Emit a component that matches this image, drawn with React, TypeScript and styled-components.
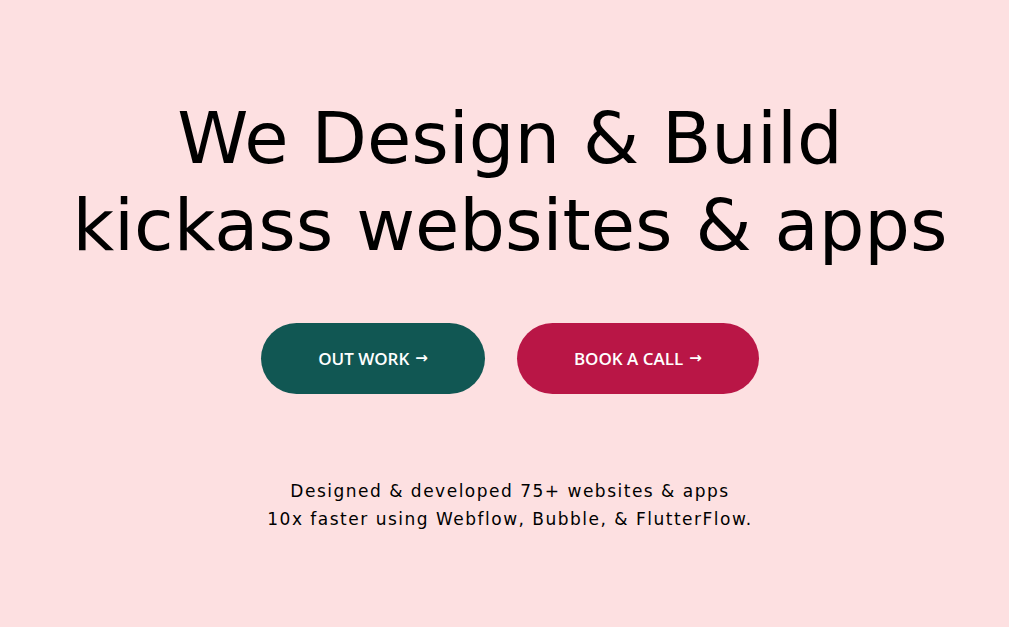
import React from "react";
import styled, { createGlobalStyle } from "styled-components";

const Global = createGlobalStyle`
  html, body { margin: 0; padding: 0; background: #fde0e1; }
  body { font-family: "DejaVu Sans", Verdana, sans-serif; }
`;

const Hero = styled.section`
  display: flex;
  flex-direction: column;
  align-items: center;
  padding: 95px 0 0 11px;
  min-height: 627px;
  box-sizing: border-box;
`;

const Title = styled.h1`
  margin: 0;
  font-family: "DejaVu Sans", Verdana, sans-serif;
  font-weight: 400;
  font-size: 72px;
  line-height: 87px;
  color: #000;
  text-align: center;
  white-space: nowrap;
`;

const Actions = styled.div`
  display: flex;
  gap: 32px;
  margin-top: 54px;
`;

const Button = styled.a<{ $bg: string }>`
  display: inline-flex;
  align-items: center;
  justify-content: center;
  gap: 6px;
  height: 71px;
  padding: 0 57px;
  border-radius: 36px;
  background: ${(p) => p.$bg};
  color: #fff;
  font-family: "Open Sans", sans-serif;
  font-weight: 600;
  font-size: 17px;
  text-decoration: none;
  box-sizing: border-box;
`;

const Arrow = styled.span`
  font-family: "DejaVu Sans", sans-serif;
  font-weight: 700;
  font-size: 15px;
  line-height: 1;
`;

const Sub = styled.p`
  margin: 83px 0 0;
  font-size: 17px;
  letter-spacing: 1.5px;
  line-height: 28px;
  text-align: center;
  color: #000;
`;

export default function App() {
  return (
    <>
      <Global />
      <Hero>
        <Title>
          We Design &amp; Build
          <br />
          kickass websites &amp; apps
        </Title>
        <Actions>
          <Button $bg="#115753" href="#">
            OUT WORK <Arrow>→</Arrow>
          </Button>
          <Button $bg="#b91646" href="#">
            BOOK A CALL <Arrow>→</Arrow>
          </Button>
        </Actions>
        <Sub>
          Designed &amp; developed 75+ websites &amp; apps
          <br />
          10x faster using Webflow, Bubble, &amp; FlutterFlow.
        </Sub>
      </Hero>
    </>
  );
}
